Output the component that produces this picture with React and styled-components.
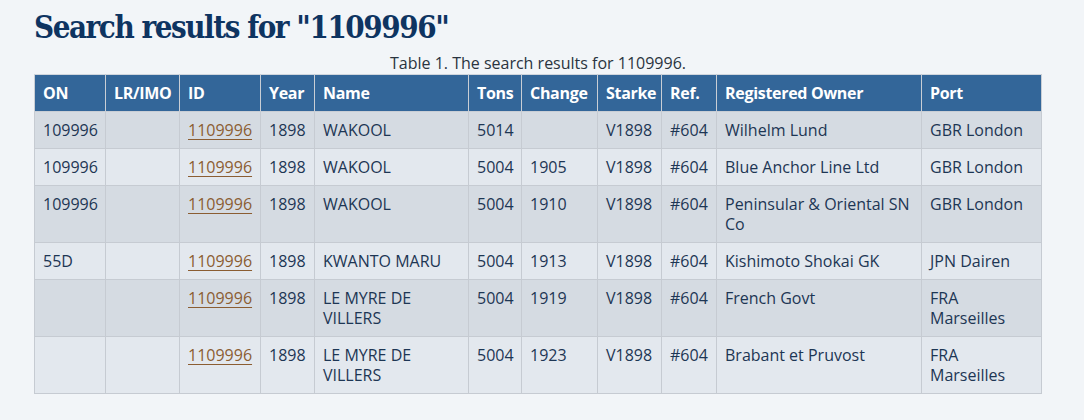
import React from "react";
import styled, { createGlobalStyle } from "styled-components";

const Global = createGlobalStyle`
  html, body { margin: 0; padding: 0; background: #f2f5f8; }
  body { font-family: "Open Sans", "Noto Sans", sans-serif; }
`;

const Page = styled.main`
  padding: 4px 34px 0 34px;
`;

const Heading = styled.h1`
  margin: 0;
  font-family: "DejaVu Serif Condensed", "DejaVu Serif", "Liberation Serif", serif;
  font-stretch: condensed;
  font-weight: bold;
  font-size: 31px;
  line-height: 46px;
  color: #0e3461;
  letter-spacing: -1.45px;
`;

const Table = styled.table`
  border-collapse: collapse;
  width: 1007px;
  table-layout: fixed;
  font-size: 16px;
  line-height: 20px;
  color: #1d3654;
`;

const Caption = styled.caption`
  font-size: 16px;
  line-height: 20px;
  color: #2a3440;
  padding: 3px 0 1px;
`;

const Th = styled.th`
  background: #336699;
  color: #ffffff;
  font-weight: 700;
  text-align: left;
  padding: 8px 8px;
  border: 1px solid #c9ced5;
  border-top-color: #d0d6dd;
  letter-spacing: -0.3px;
`;

const Row = styled.tr`
  background: ${(p) => (p.$odd ? "#d5dbe2" : "#e3e8ee")};
`;

const Td = styled.td`
  padding: 8px 8px;
  border: 1px solid #c6cbd2;
  vertical-align: top;
`;

const IdLink = styled.a`
  color: #8b5d32;
  text-decoration: underline;
  text-underline-offset: 3px;
`;

const cols = [71, 74, 81, 54, 154, 53, 76, 64, 55, 205, 120];
const headers = ["ON", "LR/IMO", "ID", "Year", "Name", "Tons", "Change", "Starke", "Ref.", "Registered Owner", "Port"];

const rows = [
  ["109996", "", "1109996", "1898", "WAKOOL", "5014", "", "V1898", "#604", "Wilhelm Lund", "GBR London"],
  ["109996", "", "1109996", "1898", "WAKOOL", "5004", "1905", "V1898", "#604", "Blue Anchor Line Ltd", "GBR London"],
  ["109996", "", "1109996", "1898", "WAKOOL", "5004", "1910", "V1898", "#604", "Peninsular & Oriental SN Co", "GBR London"],
  ["55D", "", "1109996", "1898", "KWANTO MARU", "5004", "1913", "V1898", "#604", "Kishimoto Shokai GK", "JPN Dairen"],
  ["", "", "1109996", "1898", "LE MYRE DE VILLERS", "5004", "1919", "V1898", "#604", "French Govt", "FRA Marseilles"],
  ["", "", "1109996", "1898", "LE MYRE DE VILLERS", "5004", "1923", "V1898", "#604", "Brabant et Pruvost", "FRA Marseilles"],
];

export default function App() {
  return (
    <>
      <Global />
      <Page>
        <Heading>Search results for "1109996"</Heading>
        <Table>
          <Caption>Table 1. The search results for 1109996.</Caption>
          <colgroup>
            {cols.map((w, i) => (
              <col key={i} style={{ width: w }} />
            ))}
          </colgroup>
          <thead>
            <tr>
              {headers.map((h) => (
                <Th key={h}>{h}</Th>
              ))}
            </tr>
          </thead>
          <tbody>
            {rows.map((r, i) => (
              <Row key={i} $odd={i % 2 === 0}>
                {r.map((c, j) => (
                  <Td key={j}>{j === 2 ? <IdLink href="#">{c}</IdLink> : c}</Td>
                ))}
              </Row>
            ))}
          </tbody>
        </Table>
      </Page>
    </>
  );
}
